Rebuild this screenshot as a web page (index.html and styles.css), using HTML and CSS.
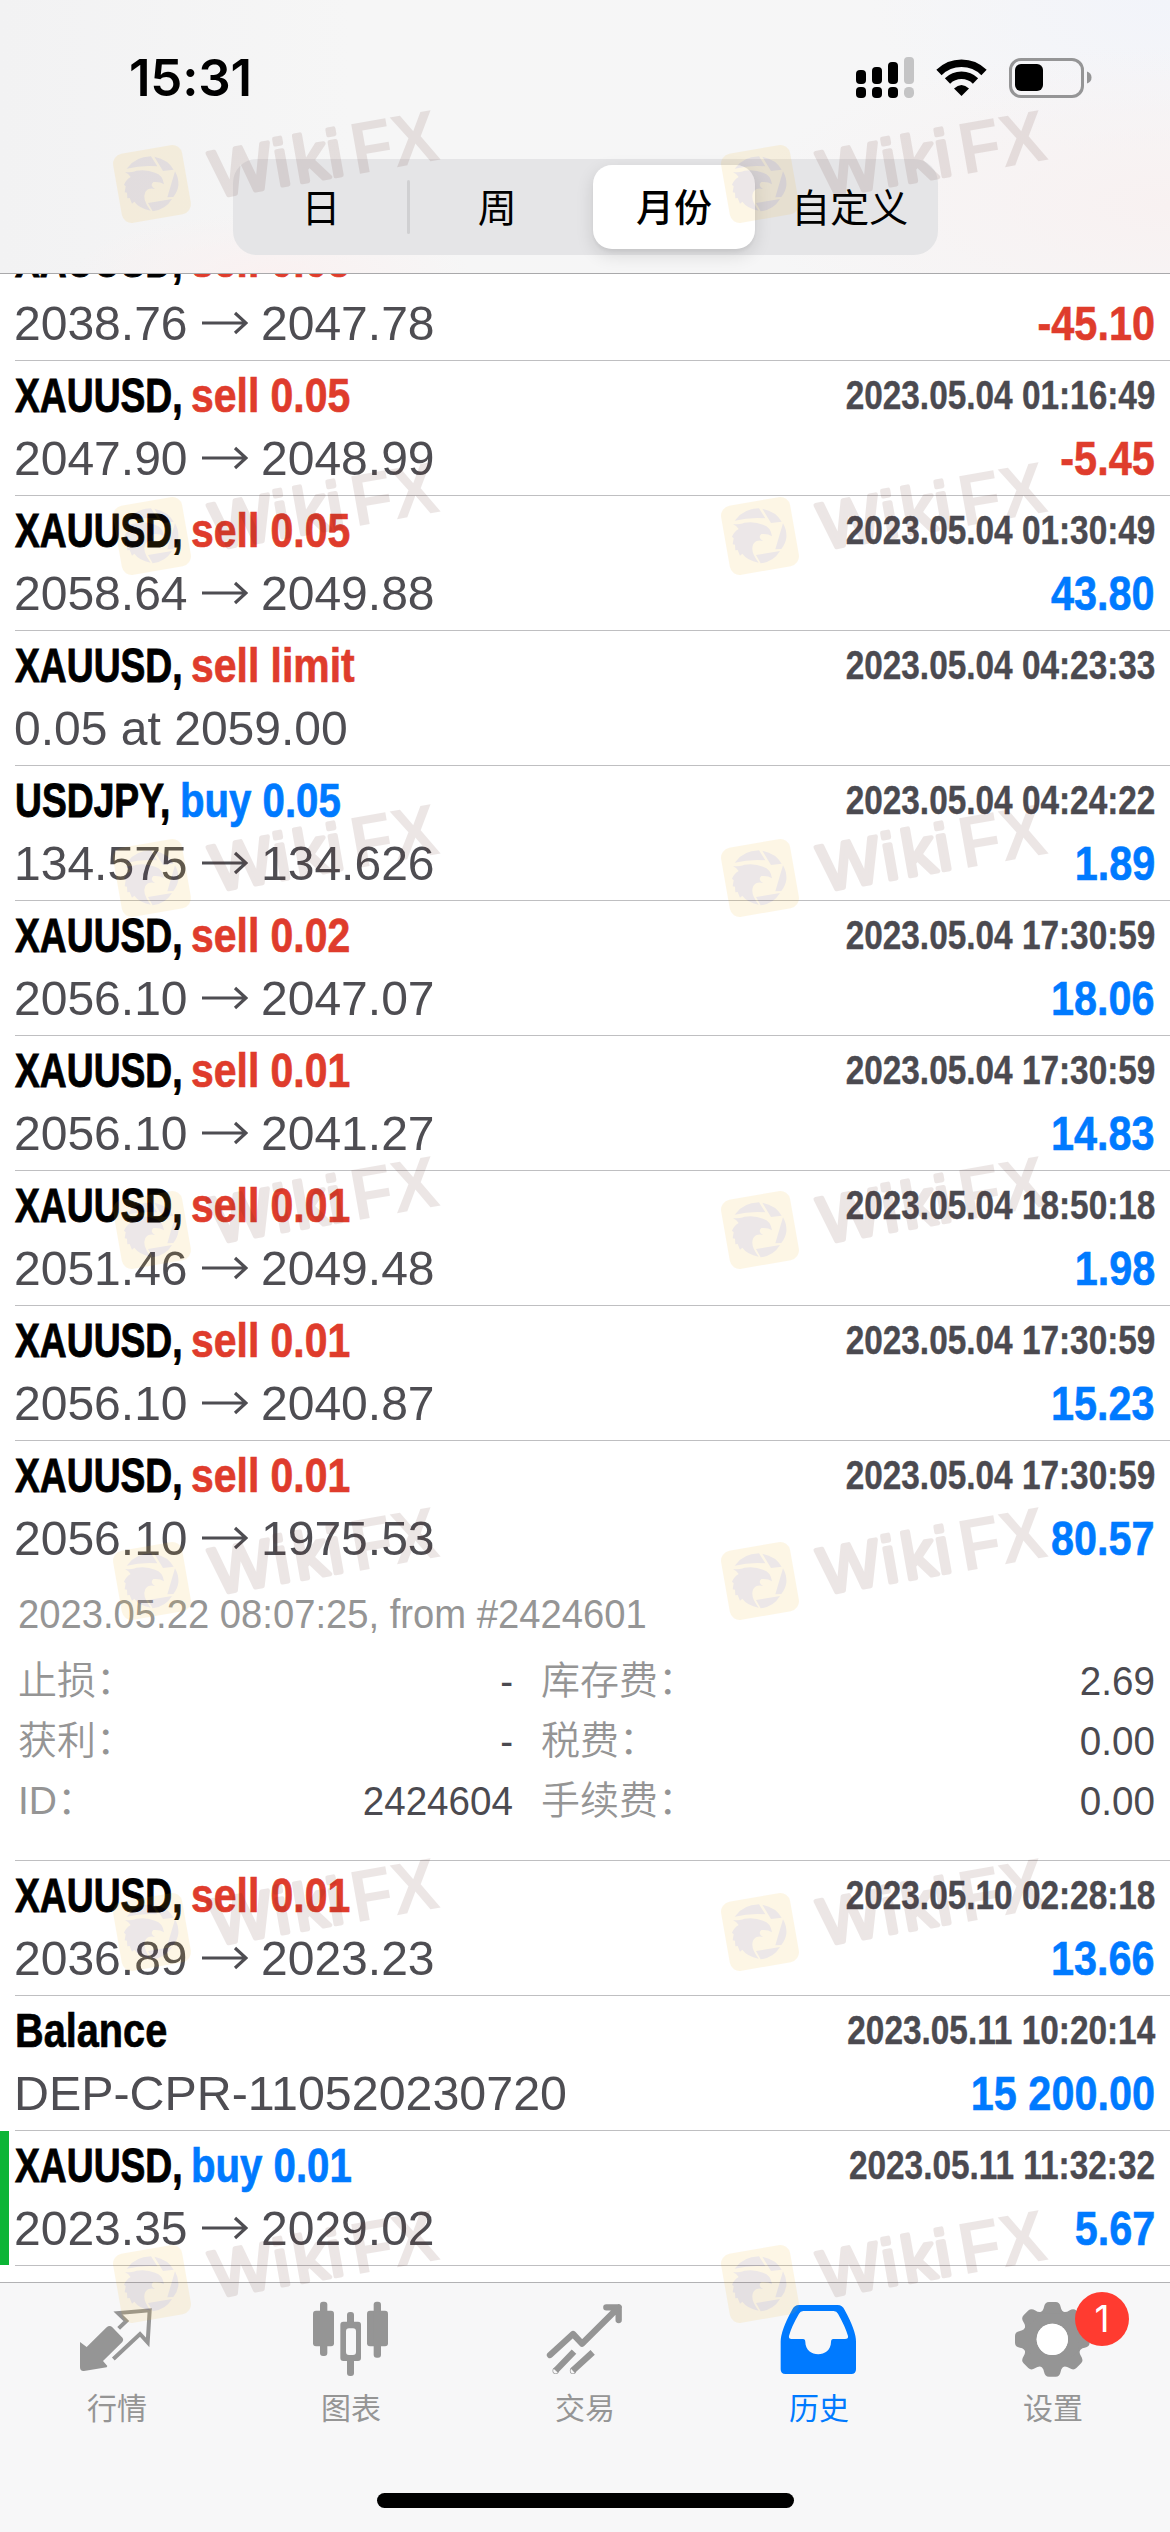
FILE: index.html
```html
<!DOCTYPE html>
<html lang="zh-CN">
<head>
<meta charset="utf-8">
<title>历史</title>
<link rel="stylesheet" href="styles.css">
</head>
<body>
<div class="screen">
  <header class="header">
    <div class="status">
      <span class="clock">15:31</span>
      <svg class="status-icons" viewBox="0 0 240 44" width="240" height="44">
        <g fill="#000">
          <rect x="1" y="15" width="10" height="14" rx="4"/><rect x="17" y="12" width="10" height="17" rx="4"/><rect x="33" y="7" width="10" height="22" rx="4"/>
          <rect x="1" y="32" width="10" height="11" rx="4"/><rect x="17" y="32" width="10" height="11" rx="4"/><rect x="33" y="32" width="10" height="11" rx="4"/>
        </g>
        <g fill="#c4c4c5"><rect x="49" y="2" width="10" height="27" rx="4"/><rect x="49" y="32" width="10" height="11" rx="4.500"/></g>
        <g fill="none" stroke="#000" stroke-width="7.500">
          <path d="M84 17.500A32 32 0 0 1 129 17.500"/><path d="M92.500 26A20 20 0 0 1 120.500 26"/>
        </g>
        <path d="M99 33.500Q106.500 26.500 114 33.500L106.500 41Z" fill="#000"/>
        <rect x="155.500" y="4.500" width="72" height="37" rx="10.500" fill="none" stroke="#959596" stroke-width="3"/>
        <rect x="160" y="9" width="28" height="27" rx="6" fill="#000"/>
        <path d="M232 16.500Q236.500 18 236.500 22.500T232 28.500Z" fill="#959596"/>
      </svg>
    </div>
    <nav class="segments">
      <span class="segment">日</span>
      <span class="segment divided">周</span>
      <span class="segment selected"><b class="pill">月份</b></span>
      <span class="segment">自定义</span>
    </nav>
  </header>

  <main class="list">
    <article class="row">
      <div class="title"><span class="symbol">XAUUSD,</span><span class="side sell">sell 0.05</span></div>
      <div class="prices"><span class="num">2038.76</span><svg class="arrow" viewBox="0 0 46 24"><path d="M0 12H44M33 2L44 12L33 22"/></svg><span class="num">2047.78</span></div><div class="profit sell">-45.10</div>
    </article>
    <article class="row">
      <div class="title"><span class="symbol">XAUUSD,</span><span class="side sell">sell 0.05</span></div><time class="date">2023.05.04 01:16:49</time>
      <div class="prices"><span class="num">2047.90</span><svg class="arrow" viewBox="0 0 46 24"><path d="M0 12H44M33 2L44 12L33 22"/></svg><span class="num">2048.99</span></div><div class="profit sell">-5.45</div>
    </article>
    <article class="row">
      <div class="title"><span class="symbol">XAUUSD,</span><span class="side sell">sell 0.05</span></div><time class="date">2023.05.04 01:30:49</time>
      <div class="prices"><span class="num">2058.64</span><svg class="arrow" viewBox="0 0 46 24"><path d="M0 12H44M33 2L44 12L33 22"/></svg><span class="num">2049.88</span></div><div class="profit buy">43.80</div>
    </article>
    <article class="row">
      <div class="title"><span class="symbol">XAUUSD,</span><span class="side sell">sell limit</span></div><time class="date">2023.05.04 04:23:33</time>
      <div class="prices"><span class="num">0.05 at 2059.00</span></div>
    </article>
    <article class="row">
      <div class="title"><span class="symbol usd">USDJPY,</span><span class="side buy">buy 0.05</span></div><time class="date">2023.05.04 04:24:22</time>
      <div class="prices"><span class="num">134.575</span><svg class="arrow" viewBox="0 0 46 24"><path d="M0 12H44M33 2L44 12L33 22"/></svg><span class="num">134.626</span></div><div class="profit buy">1.89</div>
    </article>
    <article class="row">
      <div class="title"><span class="symbol">XAUUSD,</span><span class="side sell">sell 0.02</span></div><time class="date">2023.05.04 17:30:59</time>
      <div class="prices"><span class="num">2056.10</span><svg class="arrow" viewBox="0 0 46 24"><path d="M0 12H44M33 2L44 12L33 22"/></svg><span class="num">2047.07</span></div><div class="profit buy">18.06</div>
    </article>
    <article class="row">
      <div class="title"><span class="symbol">XAUUSD,</span><span class="side sell">sell 0.01</span></div><time class="date">2023.05.04 17:30:59</time>
      <div class="prices"><span class="num">2056.10</span><svg class="arrow" viewBox="0 0 46 24"><path d="M0 12H44M33 2L44 12L33 22"/></svg><span class="num">2041.27</span></div><div class="profit buy">14.83</div>
    </article>
    <article class="row">
      <div class="title"><span class="symbol">XAUUSD,</span><span class="side sell">sell 0.01</span></div><time class="date">2023.05.04 18:50:18</time>
      <div class="prices"><span class="num">2051.46</span><svg class="arrow" viewBox="0 0 46 24"><path d="M0 12H44M33 2L44 12L33 22"/></svg><span class="num">2049.48</span></div><div class="profit buy">1.98</div>
    </article>
    <article class="row">
      <div class="title"><span class="symbol">XAUUSD,</span><span class="side sell">sell 0.01</span></div><time class="date">2023.05.04 17:30:59</time>
      <div class="prices"><span class="num">2056.10</span><svg class="arrow" viewBox="0 0 46 24"><path d="M0 12H44M33 2L44 12L33 22"/></svg><span class="num">2040.87</span></div><div class="profit buy">15.23</div>
    </article>
    <article class="row expanded">
      <div class="title"><span class="symbol">XAUUSD,</span><span class="side sell">sell 0.01</span></div><time class="date">2023.05.04 17:30:59</time>
      <div class="prices"><span class="num">2056.10</span><svg class="arrow" viewBox="0 0 46 24"><path d="M0 12H44M33 2L44 12L33 22"/></svg><span class="num">1975.53</span></div><div class="profit buy">80.57</div>
      <section class="details">
        <p class="origin"><span>2023.05.22 08:07:25, from #2424601</span></p>
        <dl class="facts">
          <dt>止损：</dt><dd>-</dd><dt>库存费：</dt><dd>2.69</dd>
          <dt>获利：</dt><dd>-</dd><dt>税费：</dt><dd>0.00</dd>
          <dt>ID：</dt><dd>2424604</dd><dt>手续费：</dt><dd>0.00</dd>
        </dl>
      </section>
    </article>
    <article class="row">
      <div class="title"><span class="symbol">XAUUSD,</span><span class="side sell">sell 0.01</span></div><time class="date">2023.05.10 02:28:18</time>
      <div class="prices"><span class="num">2036.89</span><svg class="arrow" viewBox="0 0 46 24"><path d="M0 12H44M33 2L44 12L33 22"/></svg><span class="num">2023.23</span></div><div class="profit buy">13.66</div>
    </article>
    <article class="row">
      <div class="title"><span class="side balance">Balance</span></div><time class="date">2023.05.11 10:20:14</time>
      <div class="prices"><span class="num deposit">DEP-CPR-110520230720</span></div><div class="profit buy">15 200.00</div>
    </article>
    <article class="row marked">
      <div class="title"><span class="symbol">XAUUSD,</span><span class="side buy">buy 0.01</span></div><time class="date">2023.05.11 11:32:32</time>
      <div class="prices"><span class="num">2023.35</span><svg class="arrow" viewBox="0 0 46 24"><path d="M0 12H44M33 2L44 12L33 22"/></svg><span class="num">2029.02</span></div><div class="profit buy">5.67</div>
    </article>
  </main>

  <footer class="tabbar">
    <nav class="tabs">
      <a class="tab">
        <svg class="icon" viewBox="-9 0 360 300">
          <path fill="currentColor" d="M60 156L80 171L140 112Q149 104 157 112L188 144Q192 150 187 156L129 213L142 228L140 232L72 243Q60 244 60 232Z"/>
          <path fill="none" stroke="currentColor" stroke-width="12" d="M176 115L199 93L174 69L269 61L263 157L240 132L160 207"/>
        </svg>
        <span>行情</span>
      </a>
      <a class="tab">
        <svg class="icon" viewBox="0 0 360 300" fill="currentColor">
          <rect x="66" y="62" width="63" height="107" rx="9"/><rect x="87" y="35" width="22" height="163" rx="9"/>
          <rect x="228" y="62" width="63" height="107" rx="9"/><rect x="248" y="35" width="22" height="168" rx="9"/>
          <rect x="168" y="66" width="21" height="40" rx="9"/><rect x="168" y="200" width="21" height="58" rx="9"/>
          <path fill-rule="evenodd" d="M157 95H201Q210 95 210 104V204Q210 213 201 213H157Q148 213 148 204V104Q148 95 157 95ZM174 115Q165 115 165 124V186Q165 195 174 195H186Q195 195 195 186V124Q195 115 186 115Z"/>
        </svg>
        <span>图表</span>
      </a>
      <a class="tab">
        <svg class="icon" viewBox="-15 0 360 300" fill="none" stroke="currentColor" stroke-width="19" stroke-linejoin="round">
          <path stroke-linecap="round" d="M60 195L129 132L156 161L266 52M229 52H266V90"/>
          <path d="M77 242L132 185M128 242L188 187"/>
          <circle cx="77" cy="242" r="1" stroke-width="17"/><circle cx="129" cy="242" r="1" stroke-width="17"/>
        </svg>
        <span>交易</span>
      </a>
      <a class="tab active">
        <svg class="icon" viewBox="0 0 360 300" fill="currentColor">
          <path fill-rule="evenodd" d="M120 45H236Q250 45 257 60Q291 122 291 155V238Q291 252 277 252H79Q65 252 65 238V155Q65 122 99 60Q106 45 120 45ZM133 63Q124 63 120 71Q96 112 90 138Q88 147 98 147H132Q139 147 139 156C139 205 216 205 216 156Q216 147 223 147H258Q269 147 267 138Q260 112 237 71Q233 63 224 63Z"/>
        </svg>
        <span>历史</span>
      </a>
      <a class="tab">
        <svg class="icon" viewBox="9 0 360 300">
          <defs><path id="tooth" d="M-42 -78Q-27 -83 -25 -97Q-22 -112 -10 -112H10Q22 -112 25 -97Q27 -83 42 -78Z"/></defs>
          <g transform="translate(187 148)" fill="currentColor">
            <circle r="67" fill="none" stroke="currentColor" stroke-width="40"/>
            <use href="#tooth"/><use href="#tooth" transform="rotate(45)"/><use href="#tooth" transform="rotate(90)"/><use href="#tooth" transform="rotate(135)"/>
            <use href="#tooth" transform="rotate(180)"/><use href="#tooth" transform="rotate(225)"/><use href="#tooth" transform="rotate(270)"/><use href="#tooth" transform="rotate(315)"/>
          </g>
          <circle cx="187" cy="148" r="47" fill="#fff"/>
        </svg>
        <span>设置</span>
        <b class="badge">1</b>
      </a>
    </nav>
    <div class="home"></div>
  </footer>

  <svg class="watermarks" viewBox="0 0 1170 2532" width="1170" height="2532">
    <defs>
      <g id="mark" opacity=".11">
        <rect x="-35" y="-35" width="70" height="70" rx="10" fill="#f3b41e" transform="rotate(-10)"/>
        <g fill="#583038" transform="scale(.3333) translate(-151 -274)">
          <path d="M75 228Q100 192 148 191L167 221Q120 217 75 228Z"/>
          <path d="M158 192Q200 201 216 231L184 235Z"/>
          <path d="M220 236Q243 278 215 313L197 314Z"/>
          <path d="M139 331L211 319Q192 351 153 356Z"/>
          <path d="M70 239Q95 239 104 234Q135 229 160 240Q183 246 187 275Q175 266 155 268Q143 279 160 289Q140 284 131 298Q120 320 147 354Q112 347 98 327L91 333L84 316L77 317L76 300L69 299L72 281L67 276Q72 262 87 253Q80 243 70 239Z"/>
        </g>
        <g transform="rotate(-10)" fill="#58261e" stroke="#58261e" stroke-linejoin="round" class="brand">
          <text y="24" font-size="65" stroke-width="4.500"><tspan x="60">W</tspan><tspan x="124">i</tspan><tspan x="144">k</tspan><tspan x="178">i</tspan></text>
          <text x="202" y="26" textLength="87" lengthAdjust="spacingAndGlyphs" font-size="73" font-weight="700" stroke-width="0">FX</text>
        </g>
      </g>
    </defs>
    <use href="#mark" x="152" y="184"/><use href="#mark" x="760" y="184"/>
    <use href="#mark" x="152" y="536"/><use href="#mark" x="760" y="536"/>
    <use href="#mark" x="152" y="878"/><use href="#mark" x="760" y="878"/>
    <use href="#mark" x="152" y="1230"/><use href="#mark" x="760" y="1230"/>
    <use href="#mark" x="152" y="1581"/><use href="#mark" x="760" y="1581"/>
    <use href="#mark" x="152" y="1932"/><use href="#mark" x="760" y="1932"/>
    <use href="#mark" x="152" y="2284"/><use href="#mark" x="760" y="2284"/>
  </svg>
</div>
</body>
</html>
```
FILE: styles.css
```css
* { box-sizing: border-box; margin: 0; padding: 0; }
body { background: #fff; font-family: "Liberation Sans", "Noto Sans CJK SC", sans-serif; }
.screen { position: relative; width: 1170px; height: 2532px; display: flex; flex-direction: column; overflow: hidden; background: #fff; }

.header {
  flex: none; height: 274px; border-bottom: 1px solid #a9a9ab; z-index: 1; position: relative;
  background:
    radial-gradient(420px 160px at 100% 75%, #f8f1f1, transparent),
    radial-gradient(300px 160px at 100% 0, #f2f4fa, transparent),
    radial-gradient(200px 60px at 270px 100%, #faf1f1, transparent),
    linear-gradient(90deg, #f2f2f3, #f6f6f6 30%, #f6f6f7);
}
.status { height: 159px; padding: 45px 75px 0 129px; display: flex; justify-content: space-between; }
.clock { font: 600 51px/66px Inter, sans-serif; letter-spacing: -.2px; }
.status-icons { margin-top: 10px; }
.segments { width: 705px; height: 96px; margin-left: 233px; border-radius: 24px; background: #e5e5e7; display: grid; grid-template-columns: repeat(4, 1fr); }
.segment { display: flex; align-items: center; justify-content: center; padding-bottom: 5px; font: 400 39px/58px "Noto Sans CJK SC", sans-serif; color: #000; }
.selected { padding: 0 0 0 1px; }
.divided { position: relative; }
.divided::before { content: ""; position: absolute; left: -2px; top: 21px; width: 3px; height: 54px; border-radius: 2px; background: #d0d0d2; }
.pill { width: 162px; height: 84px; border-radius: 19px; background: #fff; box-shadow: 0 6px 18px rgba(0,0,0,.12), 0 3px 3px rgba(0,0,0,.04); font-weight: 500; font-size: 38px; line-height: 79px; text-align: center; }

.list { height: 2008px; flex: none; overflow: hidden; padding-left: 15px; background: #fff; }
.row { position: relative; height: 135px; border-bottom: 1px solid #bfbfc1; padding: 4px 15px 0 0; display: grid; grid-template-columns: 1fr auto; grid-template-rows: 60px 66px; align-items: start; }
.row:first-child { margin-top: -48px; }
.title { display: flex; grid-column: 1; font-weight: 700; font-size: 49px; line-height: 60px; white-space: nowrap; color: #000; }
.symbol { width: 176px; transform: scaleX(.76); transform-origin: 0 0; -webkit-text-stroke: .9px; }
.usd { width: 165px; }
.side { transform: scaleX(.835); transform-origin: 0 0; -webkit-text-stroke: .7px; }
.title .buy { transform: scaleX(.82); }
.title .balance { transform: scaleX(.81); }
.sell { color: #df3c2c; }
.buy { color: #007aff; }
.date { grid-column: 2; justify-self: end; font-weight: 700; font-size: 40px; line-height: 60px; white-space: nowrap; color: #4b4a50; transform: scaleX(.834); transform-origin: 100% 0; -webkit-text-stroke: .4px; }
.prices { grid-column: 1; grid-row: 2; display: flex; align-items: center; font-size: 49px; line-height: 66px; color: #4e4d52; white-space: nowrap; }
.num { width: 188px; flex: none; transform: scaleX(.98); transform-origin: 0 50%; margin-left: -1px; }
.prices .deposit { transform: scaleX(.987); }
.arrow { width: 46px; height: 24px; margin: 0 14px 0 0; fill: none; stroke: currentColor; stroke-width: 3.2; }
.profit { grid-column: 2; grid-row: 2; justify-self: end; font-weight: 700; font-size: 49px; line-height: 66px; white-space: nowrap; transform: scaleX(.845); transform-origin: 100% 0; -webkit-text-stroke: .6px; }
.marked::before { content: ""; position: absolute; left: -15px; top: 0; width: 9px; height: 134px; background: #0cb536; }

.expanded { height: 420px; grid-template-rows: 60px 66px 1fr; }
.details { grid-column: 1 / 3; grid-row: 3; padding: 13px 0 0 3px; }
.origin { font-size: 40px; line-height: 60px; white-space: nowrap; color: #959595; }
.origin span { display: inline-block; transform: scaleX(.955); transform-origin: 0 0; }
.facts { margin-top: 7px; display: grid; grid-template-columns: 200px 295px 200px 1fr; column-gap: 0; grid-auto-rows: 60px; font-size: 40px; line-height: 60px; }
.facts dt { font: 350 39px/60px "Liberation Sans", "Noto Sans CJK SC", sans-serif; color: #959595; white-space: nowrap; }
.facts dt:nth-of-type(even) { padding-left: 28px; }
.facts dd { text-align: right; color: #4b4a50; transform: scaleX(.965); transform-origin: 100% 0; }

.tabbar { position: relative; flex: 1; border-top: 1px solid #b2b2b4; background: #f7f7f8; display: flex; flex-direction: column; align-items: center; justify-content: space-between; padding-bottom: 24px; }
.tabs { width: 1170px; display: grid; grid-template-columns: repeat(5, 1fr); }
.tab { position: relative; padding-top: 7px; display: flex; flex-direction: column; align-items: center; color: #959595; font: 400 30px/32px "Noto Sans CJK SC", sans-serif; }
.icon { width: 120px; height: 100px; }
.active { color: #007aff; }
.badge { position: absolute; left: 139px; top: 9px; width: 54px; height: 54px; border-radius: 50%; background: #ff3b30; color: #fff; font: 400 37px/54px Inter, sans-serif; text-align: center; }
.home { width: 417px; height: 15px; border-radius: 8px; background: #000; }

.watermarks { position: absolute; left: 0; top: 0; z-index: 2; pointer-events: none; }
.brand { font-family: "Liberation Sans", sans-serif; }
```
